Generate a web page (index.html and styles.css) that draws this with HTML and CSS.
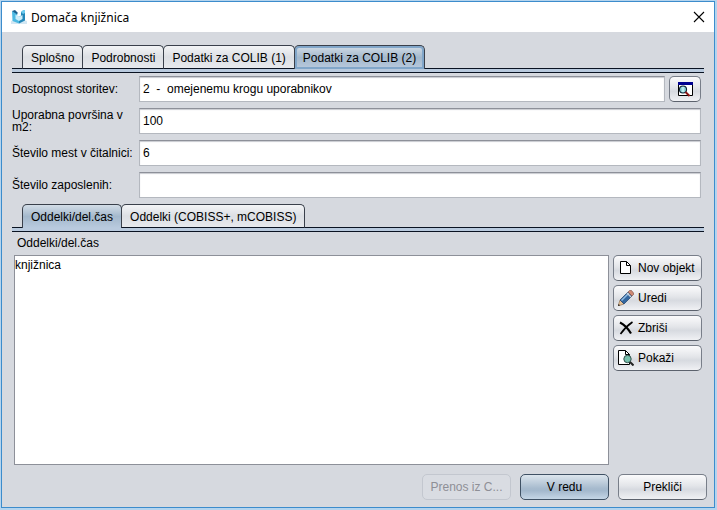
FILE: index.html
```html
<!DOCTYPE html>
<html lang="sl">
  <head>
    <meta charset="UTF-8" />
    <meta name="viewport" content="width=device-width, initial-scale=1.0" />
    <title>Domača knjižnica</title>
    <link rel="stylesheet" href="styles.css">
  </head>
  <body>
    <div class="window">
      <header class="titlebar">
        <svg class="logo" width="16" height="16" viewBox="0 0 16 16">
          <path d="M0 12l3-1 5 3 5-3 3 1v3H0z" fill="#d3e7f3" />
          <path d="M1 2l5 1.500v3l2 1.500v6.500L1.500 12z" fill="#4db9e2" />
          <path d="M14 1l-4 2v3.500L8 8v6.500l6-3z" fill="#2387b8" />
          <path d="M1 2l3-1 2.500 2.500v2L4 4z" fill="#1a5f8e" />
          <path d="M10 3l2-2h2v3l-2 1z" fill="#6ccbee" />
          <path d="M4.500 5.500L8 8l3.500-2v4L8 12l-3.500-2z" fill="#cdeefa" />
        </svg>
        <h1>Domača knjižnica</h1>
        <button class="close" aria-label="Zapri">
          <svg width="12" height="12" viewBox="0 0 12 12">
            <path d="M1 1l10 10M11 1L1 11" stroke="#000" stroke-width="1.1" />
          </svg>
        </button>
      </header>

      <main>
        <div class="tabs" role="tablist">
          <button class="tab" role="tab">Splošno</button>
          <button class="tab" role="tab">Podrobnosti</button>
          <button class="tab" role="tab">Podatki za COLIB (1)</button>
          <button class="tab selected focused" role="tab" aria-selected="true">Podatki za COLIB (2)</button>
        </div>

        <form class="fields">
          <div class="row">
            <label for="access">Dostopnost storitev:</label>
            <input type="text" id="access" value="2  -  omejenemu krogu uporabnikov" />
            <button type="button" class="btn lookup" aria-label="Izberi">
              <svg width="16" height="16" viewBox="0 0 16 16">
                <path d="M1.500 1.500h14v13h-14z" fill="#fff" stroke="#000" />
                <path d="M1 1h15v3H1z" fill="#000090" />
                <circle cx="6" cy="8.500" r="3.500" fill="#8fd6dc" stroke="#123" stroke-width="1.200" />
                <path d="M6 6v5" stroke="#e8ffff" />
                <path d="M8.500 11l4 4" stroke="#8c1414" stroke-width="2" />
              </svg>
            </button>
          </div>
          <div class="row">
            <label for="area">Uporabna površina v m2:</label>
            <input type="text" id="area" value="100" />
          </div>
          <div class="row">
            <label for="seats">Število mest v čitalnici:</label>
            <input type="text" id="seats" value="6" />
          </div>
          <div class="row">
            <label for="staff">Število zaposlenih:</label>
            <input type="text" id="staff" value="" />
          </div>
        </form>

        <div class="tabs" role="tablist">
          <button class="tab selected" role="tab" aria-selected="true">Oddelki/del.čas</button>
          <button class="tab" role="tab">Oddelki (COBISS+, mCOBISS)</button>
        </div>

        <section class="panel">
          <h2>Oddelki/del.čas</h2>
          <div class="columns">
            <ul class="list">
              <li>knjižnica</li>
            </ul>
            <div class="actions">
              <button class="btn">
                <svg width="16" height="16" viewBox="0 0 16 16">
                  <path d="M2.500 1.500h6l4 4v8h-10z" fill="#fff" stroke="#000" />
                  <path d="M8.500 1.500v4h4" fill="none" stroke="#000" />
                </svg>
                Nov objekt
              </button>
              <button class="btn">
                <svg width="16" height="16" viewBox="0 0 16 16">
                  <path d="M0 16l2-6 4 4z" fill="#e8c49a" stroke="#705030" stroke-width=".5" />
                  <path d="M2 10l8-8 4 4-8 8z" fill="#34679f" stroke="#1f3f68" stroke-width=".7" />
                  <path d="M3.500 10.500l7.500-7.500" stroke="#8fbce4" stroke-width="1.500" />
                  <path d="M10 2l1.500-1.500h2L15.500 3v1.500L14 6z" fill="#cf8a74" stroke="#774a40" stroke-width=".6" />
                  <path d="M9 3l4 4" stroke="#ccd2d8" stroke-width="1.300" />
                  <path d="M0 16l.7-2 1.300 1.300z" fill="#111" />
                </svg>
                Uredi
              </button>
              <button class="btn">
                <svg width="16" height="16" viewBox="0 0 16 16">
                  <path d="M2 2.500c4 2 8 6 11 11" fill="none" stroke="#000" stroke-width="2.200" />
                  <path d="M14.500 2C10 5 6 9 2.500 14" fill="none" stroke="#000" stroke-width="1.600" />
                </svg>
                Zbriši
              </button>
              <button class="btn">
                <svg width="16" height="16" viewBox="0 0 16 16">
                  <path d="M.5 .5h7l4 4v10H.5z" fill="#fff" stroke="#000" />
                  <path d="M7.500 .5v4h4" fill="none" stroke="#000" />
                  <circle cx="9.500" cy="9" r="3.700" fill="#78c0ac" stroke="#34504c" />
                  <path d="M12 12l3.500 3.500" stroke="#222" stroke-width="2" />
                </svg>
                Pokaži
              </button>
            </div>
          </div>
        </section>
      </main>

      <footer class="footer">
        <button class="btn" disabled>Prenos iz C...</button>
        <button class="btn default">V redu</button>
        <button class="btn">Prekliči</button>
      </footer>
    </div>
  </body>
</html>
```
FILE: styles.css
```css
* {
  box-sizing: border-box;
}

body {
  margin: 0;
  min-height: 100vh;
  display: flex;
  padding: 1px 2px 2px 1px;
  background: #b4d4ee;
  color: #000;
  font-family: "Liberation Sans", Arial, sans-serif;
  font-size: 12px;
}

button,
input {
  font: inherit;
  color: inherit;
}

svg {
  display: block;
  flex: none;
}

.window {
  flex: 1;
  display: flex;
  flex-direction: column;
  background: #d6d9df;
  border: 1px solid #3c8ccc;
}

.titlebar {
  display: flex;
  align-items: center;
  height: 30px;
  padding: 0 9px;
  background: #fff;
}

.titlebar h1 {
  flex: 1;
  margin: 0;
  padding-left: 4px;
  font-family: "Noto Sans", "Open Sans", sans-serif;
  font-size: 12px;
  font-weight: normal;
}

.close {
  padding: 0;
  border: none;
  background: none;
}

main {
  flex: 1;
  display: flex;
  flex-direction: column;
  padding: 13px 10px 0;
}

/* tab strip with the double line under it */
.tabs {
  display: flex;
  padding-left: 10px;
  height: 28px;
  background: linear-gradient(#0a1322, #0a1322) 0 23px / 100% 1px no-repeat,
    linear-gradient(#b9cade, #b9cade) 0 24px / 100% 3px no-repeat,
    linear-gradient(#0a1322, #0a1322) 0 27px / 100% 1px no-repeat;
}

.tab {
  height: 24px;
  padding: 1px 8px 0;
  margin-right: -1px;
  border: 1px solid #3a404b;
  border-bottom-color: #0a1322;
  border-radius: 5px 5px 0 0;
  background: linear-gradient(#f3f4f6, #dcdfe4 50%, #e7e9ed);
}

.tab.selected {
  border-bottom: none;
  background: linear-gradient(#d3dde7, #a3b8cc 50%, #b9cade);
}

.tab.focused {
  box-shadow: inset 0 0 0 2px #81a6c9;
}

.fields {
  display: flex;
  flex-direction: column;
  gap: 6px;
  padding: 3px 3px 6px 0;
}

.row {
  display: flex;
  align-items: center;
  height: 26px;
}

.row label {
  width: 127px;
  line-height: 12px;
}

.row input {
  flex: 1;
  min-width: 0;
  height: 26px;
  padding: 0 3px;
  border: 1px solid #b4b8bf;
  border-top: 1px solid #8d9099;
  border-radius: 0;
  background: #fff;
  box-shadow: inset 0 1px 1px #c8cad0;
  white-space: pre;
}

.btn {
  display: flex;
  align-items: center;
  justify-content: center;
  height: 26px;
  padding: 0;
  border: 1px solid #787e89;
  border-bottom-color: #5c626d;
  border-radius: 5px;
  background: linear-gradient(#fbfbfc, #e3e5e9 45%, #d7dae0 60%, #f0f1f4);
}

.btn.default {
  border-color: #3f5164;
  background: linear-gradient(#dce5ed, #a7bbce 55%, #a3b8cc 65%, #c5d6e6);
}

.btn:disabled {
  color: #8e8f96;
  border-color: #c3c7cf;
  background: #d9dce2;
}

.lookup {
  width: 32px;
  margin-left: 4px;
}

.panel {
  flex: 1;
  display: flex;
  flex-direction: column;
  padding: 0 2px;
}

.panel h2 {
  margin: 0;
  padding-left: 3px;
  line-height: 23px;
  font-size: 12px;
  font-weight: normal;
}

.columns {
  flex: 1;
  display: flex;
  gap: 4px;
}

.list {
  flex: 1;
  margin: 0;
  padding: 1px 0;
  list-style: none;
  line-height: 16px;
  background: #fff;
  border: 1px solid #8d9099;
}

.actions {
  display: flex;
  flex-direction: column;
  gap: 4px;
  width: 89px;
}

.actions .btn {
  justify-content: flex-start;
  gap: 4px;
  padding-left: 4px;
  white-space: nowrap;
}

.footer {
  display: flex;
  justify-content: flex-end;
  gap: 9px;
  padding: 9px 7px 7px;
}

.footer .btn {
  width: 89px;
}
```
